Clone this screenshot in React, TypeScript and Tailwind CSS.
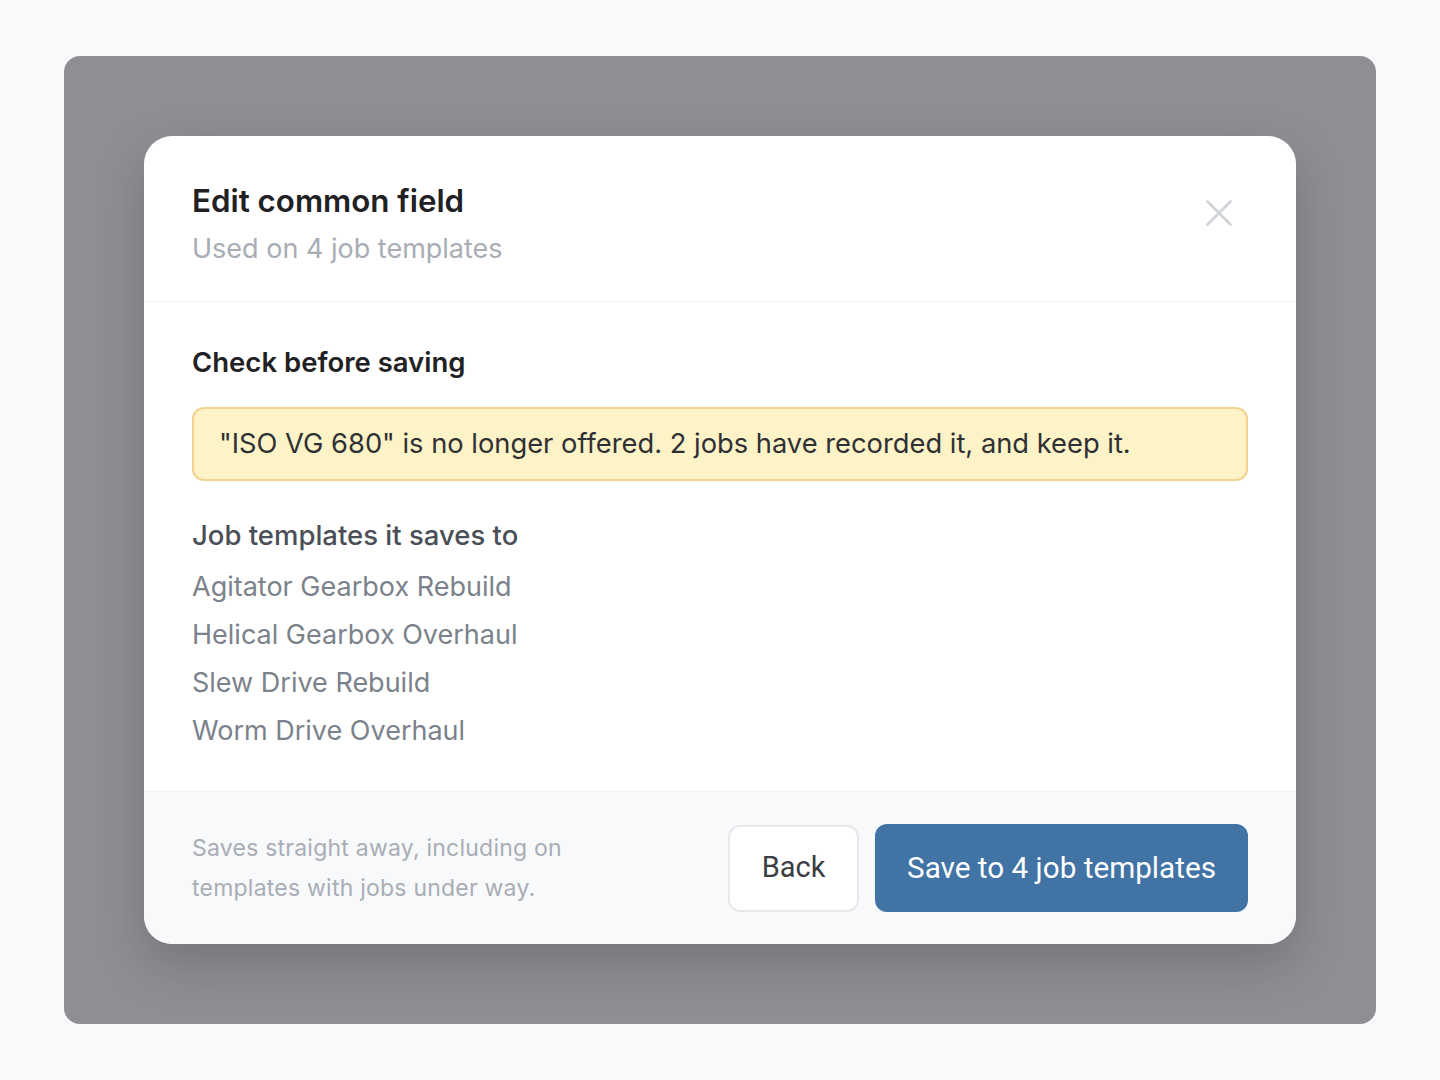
import React from "react";

const templates = [
  "Agitator Gearbox Rebuild",
  "Helical Gearbox Overhaul",
  "Slew Drive Rebuild",
  "Worm Drive Overhaul",
];

export default function App() {
  return (
    <div className="min-h-screen bg-[#f8f9fb] px-16 pt-14 pb-14 font-['Inter',sans-serif]">
      <div className="rounded-2xl bg-[#8e8f93] px-20 py-20">
        <div className="overflow-hidden rounded-[28px] bg-white shadow-[0_20px_50px_rgba(0,0,0,0.18)]">
          {/* header */}
          <div className="flex items-start justify-between border-b border-[#eef0f3] pl-12 pr-16 pt-[46px] pb-[36px]">
            <div>
              <h2 className="text-[31.3px] font-semibold leading-[38px] text-[#1f2124]">Edit common field</h2>
              <p className="mt-[13px] text-[27px] leading-[32px] text-[#a8adb5]">Used on 4 job templates</p>
            </div>
            <button className="mt-[18px] text-[#cfd2d6]" aria-label="Close">
              <svg width="26" height="26" viewBox="0 0 26 26" fill="none" stroke="currentColor" strokeWidth="2.6" strokeLinecap="round">
                <path d="M1.5 1.5l23 23M24.5 1.5l-23 23" />
              </svg>
            </button>
          </div>

          {/* body */}
          <div className="px-12 pt-[42px] pb-[36px]">
            <h3 className="text-[27.5px] font-semibold leading-[36px] text-[#1f2124]">Check before saving</h3>
            <div className="mt-[27px] rounded-xl border-2 border-[#f3d28f] bg-[#fef3c7] px-[25px] py-[18px] text-[27.3px] leading-[34px] text-[#2f3034]">
              "ISO VG 680" is no longer offered. 2 jobs have recorded it, and keep it.
            </div>
            <h4 className="mt-[36px] text-[27.5px] font-medium leading-[36px] text-[#4a4f57]">Job templates it saves to</h4>
            <ul className="mt-[10px] flex flex-col">
              {templates.map((t) => (
                <li key={t} className="text-[27px] leading-[48px] text-[#7c828b]">
                  {t}
                </li>
              ))}
            </ul>
          </div>

          {/* footer */}
          <div className="flex items-center justify-between border-t border-[#eef0f3] bg-[#f8f9fb] px-12 pt-8 pb-8">
            <p className="w-[400px] text-[23px] leading-[40px] tracking-[0.01em] text-[#a8adb5]">
              Saves straight away, including on templates with jobs under way.
            </p>
            <div className="flex items-center gap-4 font-['Roboto',sans-serif]">
              <button className="h-[87px] w-[131px] rounded-xl border-2 border-[#e6e8eb] bg-white text-[29px] text-[#3a3d42]">
                Back
              </button>
              <button className="h-[88px] rounded-xl bg-[#4173a5] px-[32px] text-[29.7px] text-white">
                Save to 4 job templates
              </button>
            </div>
          </div>
        </div>
      </div>
    </div>
  );
}
